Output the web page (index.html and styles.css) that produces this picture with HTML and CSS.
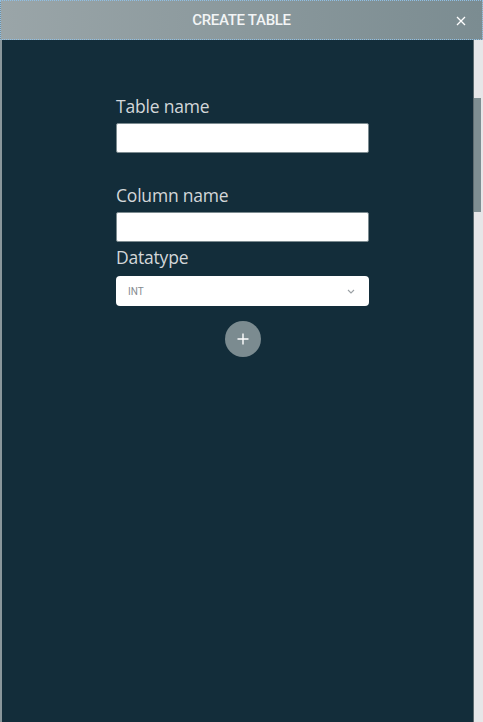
FILE: index.html
```html
<!DOCTYPE html>
<html>
<head>
<meta charset="utf-8">
<link rel="stylesheet" href="styles.css">
</head>
<body>
<div class="window">
  <div class="header">
    <span class="title">CREATE TABLE</span>
    <svg class="close" width="10" height="10" viewBox="0 0 10 10"><path d="M1 1 L9 9 M9 1 L1 9" stroke="#ffffff" stroke-width="1.3"/></svg>
  </div>
  <div class="main">
    <div class="content">
      <form class="form">
        <label class="label">Table name</label>
        <input class="input" type="text">
        <label class="label label-gap">Column name</label>
        <input class="input" type="text">
        <label class="label label-tight">Datatype</label>
        <div class="select">
          <span class="select-value">INT</span>
          <svg class="chevron" width="8" height="5" viewBox="0 0 8 5"><path d="M1 1 L4 4 L7 1" fill="none" stroke="#9aa0a4" stroke-width="1.1"/></svg>
        </div>
        <div class="add-row">
          <button type="button" class="add-btn"><svg width="12" height="12" viewBox="0 0 12 12"><path d="M6 0.5 V11.5 M0.5 6 H11.5" stroke="#ffffff" stroke-width="1.4"/></svg></button>
        </div>
      </form>
    </div>
    <div class="scrollbar"><div class="thumb"></div></div>
  </div>
</div>
</body>
</html>
```
FILE: styles.css
```css
html, body {
  margin: 0;
  padding: 0;
  background: #e6e6e8;
}
.window {
  width: 483px;
  height: 722px;
  display: flex;
  flex-direction: column;
  overflow: hidden;
}
.header {
  height: 38px;
  flex: 0 0 auto;
  border: 1px dotted #8fc0e6;
  background: linear-gradient(to right, #9aa5a8, #7b8c91);
  display: flex;
  align-items: center;
  justify-content: center;
  position: relative;
}
.title {
  font-family: Roboto, "Liberation Sans", sans-serif;
  font-weight: 500;
  font-size: 15px;
  color: #f2f4f5;
  letter-spacing: -0.3px;
}
.close {
  position: absolute;
  right: 16px;
  top: 15px;
}
.main {
  flex: 1;
  display: flex;
}
.content {
  flex: 1;
  background: #132d3a;
  border-left: 2px solid #8a979b;
  padding-left: 114px;
}
.scrollbar {
  width: 9px;
  border-left: 1px solid #5d6b70;
  background: #e6e6e8;
  padding-top: 58px;
}
.thumb {
  width: 7px;
  height: 114px;
  background: #7e8e92;
}
.form {
  width: 253px;
  padding-top: 54px;
  display: flex;
  flex-direction: column;
}
.label {
  font-family: "Open Sans", "Noto Sans", sans-serif;
  font-size: 17.5px;
  line-height: 24px;
  color: #d3d7d9;
  margin-bottom: 5px;
  letter-spacing: -0.2px;
}
.label-gap {
  margin-top: 30px;
}
.label-tight {
  margin-top: 3px;
  margin-bottom: 7px;
}
.input {
  box-sizing: border-box;
  height: 30px;
  width: 253px;
  margin: 0;
  border: 1px solid #7c8b90;
  border-radius: 2px;
  background: #ffffff;
  outline: none;
}
.select {
  box-sizing: border-box;
  height: 30px;
  background: #ffffff;
  border-radius: 4px;
  display: flex;
  align-items: center;
  justify-content: space-between;
  padding: 0 14px 0 12px;
}
.select-value {
  font-family: Roboto, "Liberation Sans", sans-serif;
  font-size: 10px;
  color: #858b90;
}
.add-row {
  display: flex;
  justify-content: center;
  padding-top: 15px;
}
.add-btn {
  width: 36px;
  height: 36px;
  border-radius: 50%;
  border: none;
  padding: 0;
  background: #7b8b90;
  display: flex;
  align-items: center;
  justify-content: center;
}
```
